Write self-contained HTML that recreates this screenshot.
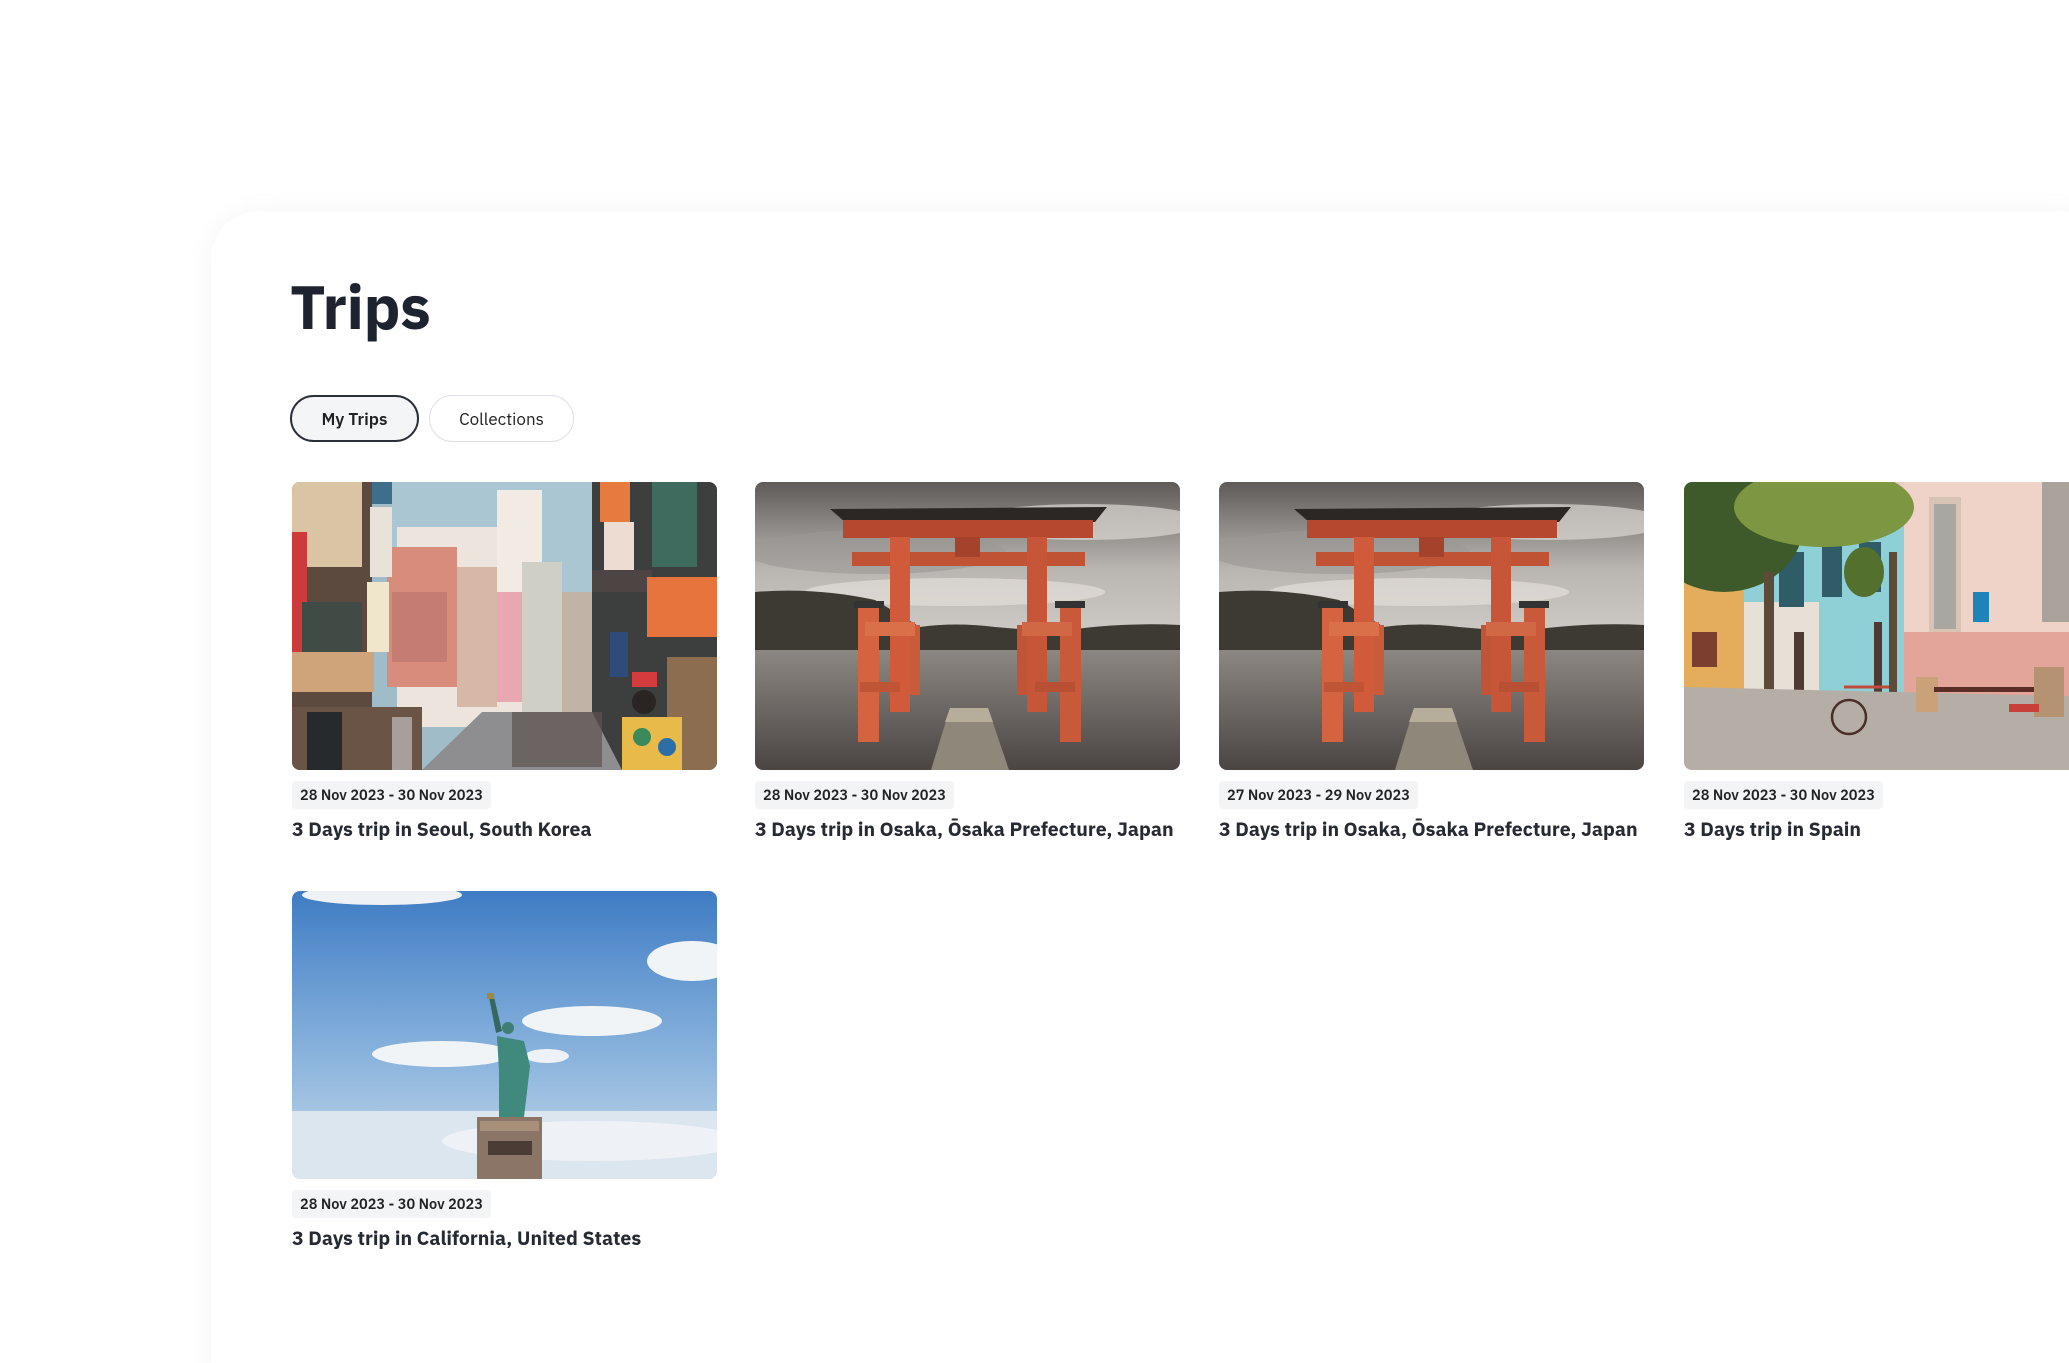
<!DOCTYPE html>
<html><head><meta charset="utf-8"><style>
html,body{margin:0;padding:0;background:#fff;width:2069px;height:1363px;overflow:hidden;}
body{position:relative;font-family:"IBM Plex Sans","Liberation Sans",sans-serif;color:#1f2430;}
.panel{position:absolute;left:211px;top:211px;width:1900px;height:1200px;background:#fff;border-radius:48px;box-shadow:0 0 28px rgba(0,0,0,0.045);}
h1{position:absolute;left:290px;top:268px;margin:0;font-size:61px;font-weight:700;letter-spacing:-0.5px;line-height:76px;color:#1e2330;}
.tab{position:absolute;top:395px;height:47px;box-sizing:border-box;border-radius:24px;font-size:17px;display:flex;align-items:center;justify-content:center;color:#222;}
.t1{left:290px;width:129px;border:2px solid #2a2f3a;background:#f3f5f7;font-weight:600;}
.t2{left:429px;width:145px;border:1.5px solid #dcdfe3;background:#fff;}
.card{position:absolute;width:425px;}
.img{width:425px;height:288px;border-radius:8px;overflow:hidden;display:block;}
.date{position:absolute;top:299px;left:0;height:28px;padding:0 8px;background:#f3f4f6;border-radius:4px;font-size:14.5px;font-weight:600;line-height:28px;color:#222;}
.title{position:absolute;top:335px;left:0;font-size:19.5px;font-weight:700;white-space:nowrap;color:#262a33;}
</style></head><body>
<div class="panel"></div>
<h1>Trips</h1>
<div class="tab t1">My Trips</div>
<div class="tab t2">Collections</div>

<svg width="0" height="0" style="position:absolute">
<defs>
<linearGradient id="tsky" x1="0" y1="0" x2="0" y2="1"><stop offset="0" stop-color="#5e5a58"/><stop offset=".3" stop-color="#b9b5b1"/><stop offset=".55" stop-color="#cfcbc6"/></linearGradient>
<linearGradient id="twat" x1="0" y1="0" x2="0" y2="1"><stop offset="0" stop-color="#8d8783"/><stop offset="1" stop-color="#4a4543"/></linearGradient>
<g id="torii">
<rect width="425" height="288" fill="url(#tsky)"/>
<ellipse cx="120" cy="70" rx="130" ry="22" fill="#9b9794" opacity=".6"/>
<ellipse cx="330" cy="40" rx="120" ry="18" fill="#dcd8d3" opacity=".7"/>
<ellipse cx="200" cy="110" rx="150" ry="14" fill="#e2ded9" opacity=".7"/>
<path d="M0 110 Q60 105 120 118 L165 145 Q200 140 240 145 L300 150 Q360 140 425 143 L425 168 L0 168Z" fill="#3c3a33"/>
<rect y="168" width="425" height="120" fill="url(#twat)"/>
<path d="M75 27 L352 25 L340 40 L90 40Z" fill="#2c2624"/>
<rect x="88" y="38" width="250" height="18" fill="#b5482e"/>
<rect x="97" y="70" width="233" height="14" fill="#c05334"/>
<rect x="135" y="55" width="20" height="175" fill="#cf5b3a"/>
<rect x="272" y="55" width="20" height="175" fill="#c75638"/>
<rect x="200" y="55" width="25" height="20" fill="#a5422c"/>
<rect x="103" y="125" width="21" height="135" fill="#d46440"/>
<rect x="305" y="125" width="21" height="135" fill="#c85a3a"/>
<rect x="99" y="119" width="30" height="7" fill="#333"/>
<rect x="300" y="119" width="30" height="7" fill="#333"/>
<rect x="155" y="143" width="10" height="70" fill="#c95a3a"/>
<rect x="262" y="143" width="10" height="70" fill="#c05536"/>
<rect x="110" y="140" width="50" height="14" fill="#d9704a"/>
<rect x="267" y="140" width="50" height="14" fill="#d06845"/>
<rect x="105" y="200" width="40" height="10" fill="#c05536"/>
<rect x="280" y="200" width="40" height="10" fill="#b85033"/>
<path d="M195 226 L233 226 L254 288 L176 288Z" fill="#8f877a"/>
<path d="M195 226 L233 226 L238 240 L190 240Z" fill="#b7ad9b"/>
</g>
</defs>
</svg>

<div class="card" style="left:292px;top:482px">
<svg class="img" viewBox="0 0 425 288" preserveAspectRatio="none">
<rect width="425" height="288" fill="#9fbcc8"/>
<rect x="100" y="0" width="210" height="200" fill="#a9c6d2"/>
<rect x="105" y="45" width="130" height="200" fill="#ede5dd"/>
<rect x="205" y="8" width="45" height="200" fill="#f1ebe4"/>
<rect x="95" y="65" width="70" height="140" fill="#d88c7c"/>
<rect x="100" y="110" width="55" height="70" fill="#c57d73"/>
<rect x="165" y="85" width="40" height="140" fill="#d7b7a5"/>
<rect x="205" y="110" width="25" height="110" fill="#e9a7b1"/>
<rect x="230" y="80" width="40" height="160" fill="#cfcfc5"/>
<rect x="270" y="110" width="30" height="130" fill="#c2b3a7"/>
<rect x="0" y="0" width="80" height="288" fill="#5c4a3e"/>
<rect x="0" y="0" width="70" height="85" fill="#d9c5a3"/>
<rect x="0" y="50" width="15" height="120" fill="#cc3b3a"/>
<rect x="10" y="120" width="60" height="50" fill="#3f4b44"/>
<rect x="0" y="170" width="82" height="40" fill="#cfa47b"/>
<rect x="75" y="100" width="22" height="70" fill="#f0e6cc"/>
<rect x="78" y="25" width="22" height="70" fill="#e8e2d8"/>
<rect x="80" y="0" width="20" height="22" fill="#3f6e8c"/>
<rect x="300" y="0" width="125" height="288" fill="#3c3f3d"/>
<rect x="308" y="0" width="30" height="40" fill="#e77a3e"/>
<rect x="312" y="40" width="30" height="50" fill="#ecdcd2"/>
<rect x="300" y="88" width="60" height="22" fill="#4d4543"/>
<rect x="355" y="95" width="70" height="60" fill="#e8743d"/>
<rect x="360" y="0" width="45" height="85" fill="#3f6a5e"/>
<rect x="318" y="150" width="18" height="45" fill="#2f4b7a"/>
<rect x="340" y="190" width="25" height="15" fill="#d43b3d"/>
<rect x="375" y="175" width="50" height="113" fill="#8c6d4f"/>
<path d="M190 230 L300 230 L330 288 L130 288Z" fill="#8e8d8f"/>
<rect x="0" y="225" width="130" height="63" fill="#6a5446"/>
<rect x="15" y="230" width="35" height="58" fill="#262a2c"/>
<rect x="100" y="235" width="20" height="53" fill="#a89f9a"/>
<rect x="220" y="230" width="90" height="55" fill="#5e5250" opacity=".7"/>
<rect x="330" y="235" width="60" height="53" fill="#e7ba4a"/>
<circle cx="350" cy="255" r="9" fill="#3c8a5b"/><circle cx="375" cy="265" r="9" fill="#2c6fa6"/>
<circle cx="352" cy="220" r="12" fill="#2a2523"/>
</svg>
<div class="date">28 Nov 2023 - 30 Nov 2023</div>
<div class="title">3 Days trip in Seoul, South Korea</div>
</div>

<div class="card" style="left:755px;top:482px">
<svg class="img" viewBox="0 0 425 288" preserveAspectRatio="none"><use href="#torii"/></svg>
<div class="date">28 Nov 2023 - 30 Nov 2023</div>
<div class="title">3 Days trip in Osaka, Ōsaka Prefecture, Japan</div>
</div>

<div class="card" style="left:1219px;top:482px">
<svg class="img" viewBox="0 0 425 288" preserveAspectRatio="none"><use href="#torii"/></svg>
<div class="date">27 Nov 2023 - 29 Nov 2023</div>
<div class="title">3 Days trip in Osaka, Ōsaka Prefecture, Japan</div>
</div>

<div class="card" style="left:1684px;top:482px">
<svg class="img" viewBox="0 0 425 288" preserveAspectRatio="none">
<rect width="425" height="288" fill="#e8cfc6"/>
<rect x="0" y="90" width="60" height="120" fill="#e3ad5c"/>
<rect x="8" y="150" width="25" height="35" fill="#7a3f2f"/>
<rect x="60" y="40" width="160" height="180" fill="#8fd0d6"/>
<rect x="60" y="120" width="75" height="100" fill="#e6e0d6"/>
<rect x="95" y="70" width="25" height="55" fill="#2f5c66"/>
<rect x="138" y="50" width="20" height="65" fill="#2f5c66"/>
<rect x="175" y="60" width="22" height="50" fill="#2f5c66"/>
<rect x="110" y="150" width="10" height="70" fill="#4e3a32"/>
<rect x="190" y="140" width="8" height="75" fill="#4e3a32"/>
<rect x="220" y="0" width="205" height="230" fill="#efd3c8"/>
<rect x="220" y="150" width="205" height="80" fill="#e3a49a"/>
<rect x="245" y="15" width="32" height="135" fill="#d7c4b4"/>
<rect x="250" y="22" width="22" height="125" fill="#a9a7a2"/>
<rect x="358" y="0" width="30" height="140" fill="#a9a39b"/>
<rect x="289" y="110" width="16" height="30" fill="#1e84b8"/>
<ellipse cx="40" cy="40" rx="80" ry="70" fill="#3e5a2a"/>
<ellipse cx="140" cy="25" rx="90" ry="40" fill="#7c9642"/>
<ellipse cx="180" cy="90" rx="20" ry="25" fill="#53702f"/>
<rect x="80" y="90" width="10" height="140" fill="#5d4b3a"/>
<rect x="205" y="70" width="8" height="180" fill="#5d4b3a"/>
<path d="M0 205 L425 215 L425 288 L0 288Z" fill="#b4aea7"/>
<circle cx="165" cy="235" r="17" fill="none" stroke="#4a2e28" stroke-width="2.5"/>
<path d="M160 205 L205 205" stroke="#c04a3c" stroke-width="3"/>
<rect x="232" y="195" width="22" height="35" fill="#c9a27a"/>
<rect x="250" y="205" width="100" height="5" fill="#5a2e24"/>
<rect x="350" y="185" width="30" height="50" fill="#b59272"/>
<rect x="325" y="222" width="30" height="8" fill="#c8403a"/>
</svg>
<div class="date">28 Nov 2023 - 30 Nov 2023</div>
<div class="title">3 Days trip in Spain</div>
</div>

<div class="card" style="left:292px;top:891px">
<svg class="img" viewBox="0 0 425 288" preserveAspectRatio="none">
<defs><linearGradient id="ls" x1="0" y1="0" x2="0" y2="1"><stop offset="0" stop-color="#3f7cc4"/><stop offset=".6" stop-color="#8db6de"/><stop offset="1" stop-color="#c9d8e6"/></linearGradient></defs>
<rect width="425" height="288" fill="url(#ls)"/>
<ellipse cx="90" cy="4" rx="80" ry="10" fill="#eef2f6"/>
<ellipse cx="400" cy="70" rx="45" ry="20" fill="#f1f4f7"/>
<ellipse cx="300" cy="130" rx="70" ry="15" fill="#f1f4f7"/>
<ellipse cx="150" cy="163" rx="70" ry="13" fill="#f1f4f7"/>
<ellipse cx="255" cy="165" rx="22" ry="7" fill="#eef2f6"/>
<rect y="220" width="425" height="68" fill="#dce6ef"/>
<ellipse cx="300" cy="250" rx="150" ry="20" fill="#eef2f6"/>
<path d="M197 106 L202 106 L210 140 L204 142Z" fill="#34675f"/>
<rect x="195" y="102" width="7" height="6" fill="#a08a3a"/>
<circle cx="216" cy="137" r="6" fill="#3f7e72"/>
<path d="M205 145 L232 150 L238 175 L232 226 L207 226 L207 180Z" fill="#3f8a7c"/>
<path d="M185 226 L250 226 L250 288 L185 288Z" fill="#8a7566"/>
<rect x="188" y="230" width="59" height="10" fill="#a88f7a"/>
<rect x="196" y="250" width="44" height="14" fill="#4b3c35"/>
</svg>
<div class="date">28 Nov 2023 - 30 Nov 2023</div>
<div class="title">3 Days trip in California, United States</div>
</div>
</body></html>
